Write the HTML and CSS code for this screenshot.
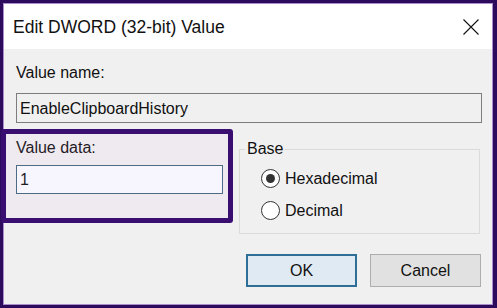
FILE: index.html
```html
<!DOCTYPE html>
<html>
<head>
<meta charset="utf-8">
<link rel="stylesheet" href="styles.css">
</head>
<body>
<div class="window">
  <div class="titlebar">
    <span class="title">Edit DWORD (32-bit) Value</span>
    <svg class="close" width="16" height="16" viewBox="0 0 16 16"><path d="M0.5 0.5L15.5 15.5M15.5 0.5L0.5 15.5" stroke="#111" stroke-width="1.1" fill="none"/></svg>
  </div>
  <div class="content">
    <div class="label">Value name:</div>
    <div class="field readonly">EnableClipboardHistory</div>
    <div class="row">
      <div class="col-left">
        <div class="label">Value data:</div>
        <div class="field edit">1</div>
      </div>
      <fieldset class="group">
        <legend>Base</legend>
        <div class="radio"><span class="dot checked"></span><span>Hexadecimal</span></div>
        <div class="radio"><span class="dot"></span><span>Decimal</span></div>
      </fieldset>
    </div>
    <div class="buttons">
      <div class="btn default">OK</div>
      <div class="btn">Cancel</div>
    </div>
  </div>
</div>
<div class="highlight"></div>
</body>
</html>
```
FILE: styles.css
```css
html, body {
  margin: 0;
  padding: 0;
}
body {
  width: 497px;
  height: 308px;
  background: #2c0a5c;
  padding: 3px 0 0 3px;
  box-sizing: border-box;
  font-family: "Liberation Sans", Arial, sans-serif;
  color: #111;
  position: relative;
  overflow: hidden;
}
.window {
  width: 490px;
  height: 302px;
  box-sizing: border-box;
  border: 1px solid #a88fcb;
  background: #f0f0f0;
  display: flex;
  flex-direction: column;
}
.titlebar {
  height: 45px;
  background: #fff;
  display: flex;
  align-items: center;
  justify-content: space-between;
  padding: 0 13px 0 9px;
}
.title {
  font-size: 17.5px;
  line-height: 20px;
  margin-top: 1px;
}
.close {
  display: block;
  margin-top: 1px;
}
.content {
  padding: 14px 10px 0 12px;
  font-size: 16px;
}
.label {
  line-height: 19px;
  height: 19px;
}
.field {
  box-sizing: border-box;
  line-height: 19px;
  display: flex;
  align-items: center;
  padding-left: 3px;
}
.readonly {
  margin-top: 11px;
  height: 30px;
  border: 1px solid #7d7d7d;
  background: #f0f0f0;
}
.row {
  display: flex;
  gap: 16px;
  margin-top: 15px;
}
.col-left {
  width: 207px;
}
.edit {
  margin-top: 8px;
  height: 29px;
  border: 1px solid #41687a;
  background: #f9fdff;
}
.group {
  margin: 3px 0 0 0;
  padding: 5px 0 7px 21px;
  width: 241px;
  box-sizing: border-box;
  border: 1px solid #dadada;
  min-width: 0;
}
.group legend {
  margin-left: -16px;
  padding: 0 2px;
  line-height: 16px;
  font-size: 16px;
}
.radio {
  height: 32px;
  display: flex;
  align-items: center;
  gap: 5px;
  line-height: 19px;
}
.dot {
  width: 19px;
  height: 19px;
  box-sizing: border-box;
  border: 1px solid #333;
  border-radius: 50%;
  background: #fff;
  display: flex;
  align-items: center;
  justify-content: center;
}
.dot.checked::after {
  content: "";
  width: 9px;
  height: 9px;
  border-radius: 50%;
  background: #333;
}
.buttons {
  display: flex;
  justify-content: flex-end;
  gap: 13px;
  margin-top: 20px;
  padding-right: 1px;
}
.btn {
  width: 111px;
  height: 33px;
  box-sizing: border-box;
  border: 1px solid #adadad;
  background: #e1e1e1;
  display: flex;
  align-items: center;
  justify-content: center;
  line-height: 19px;
}
.btn.default {
  border: 2px solid #2f6f97;
  background: #e0eaf2;
}
.highlight {
  position: absolute;
  left: 1px;
  top: 129px;
  width: 232px;
  height: 94px;
  box-sizing: border-box;
  border: 5px solid #3a0d70;
  border-radius: 3px;
  background: rgba(230, 160, 240, 0.08);
}
```
